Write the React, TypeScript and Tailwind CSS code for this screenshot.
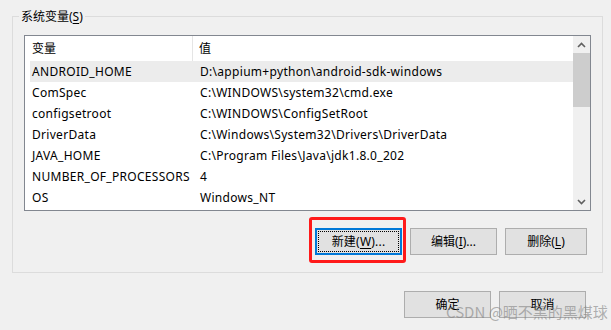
import React from "react";

const font = {
  fontFamily: '"Noto Sans", "Noto Sans CJK SC", sans-serif',
};

const rows: [string, string][] = [
  ["ANDROID_HOME", "D:\\appium+python\\android-sdk-windows"],
  ["ComSpec", "C:\\WINDOWS\\system32\\cmd.exe"],
  ["configsetroot", "C:\\WINDOWS\\ConfigSetRoot"],
  ["DriverData", "C:\\Windows\\System32\\Drivers\\DriverData"],
  ["JAVA_HOME", "C:\\Program Files\\Java\\jdk1.8.0_202"],
  ["NUMBER_OF_PROCESSORS", "4"],
  ["OS", "Windows_NT"],
];

function Btn({ children, w = "w-[87px]" }: { children: React.ReactNode; w?: string }) {
  return (
    <div
      className={`${w} h-[27px] shrink-0 border border-[#adadad] bg-[#e1e1e1] flex items-center justify-center text-[12px] text-black`}
    >
      {children}
    </div>
  );
}

export default function App() {
  return (
    <div
      className="relative w-[611px] h-[330px] bg-[#f0f0f0] overflow-hidden text-black"
      style={font}
    >
      <fieldset className="ml-[12px] mt-[8px] w-[591px] h-[265px] border border-[#dcdcdc]">
        <legend className="ml-[6px] px-[2px] text-[12px] leading-[17px]">
          系统变量(<span className="underline underline-offset-2">S</span>)
        </legend>
        <div className="ml-[11px] mt-[10px] w-[567px] h-[176px] border border-[#828790] bg-white flex">
          <div className="flex-1 pl-[5px] flex flex-col">
            <div className="h-[25px] flex items-center text-[12px] shrink-0">
              <div className="w-[163px] h-full pl-[2px] flex items-center border-r border-[#e5e5e5]">
                变量
              </div>
              <div className="pl-[6px]">值</div>
            </div>
            {rows.map(([k, v], i) => (
              <div
                key={k}
                className={`h-[21px] shrink-0 flex items-center text-[12px] tracking-[0.3px] ${i === 0 ? "bg-[#ececec]" : ""}`}
              >
                <div className="w-[170px] pl-[2px] whitespace-nowrap">{k}</div>
                <div className="whitespace-nowrap">{v}</div>
              </div>
            ))}
          </div>
          <div className="w-[17px] bg-[#f0f0f0] flex flex-col">
            <div className="h-[17px] flex items-center justify-center">
              <svg width="9" height="6" viewBox="0 0 9 6">
                <path d="M1 5 L4.5 1.5 L8 5" stroke="#606060" strokeWidth="1.6" fill="none" />
              </svg>
            </div>
            <div className="h-[54px] bg-[#cdcdcd]" />
            <div className="flex-1" />
            <div className="h-[17px] flex items-center justify-center">
              <svg width="9" height="6" viewBox="0 0 9 6">
                <path d="M1 1 L4.5 4.5 L8 1" stroke="#606060" strokeWidth="1.6" fill="none" />
              </svg>
            </div>
          </div>
        </div>
        <div className="mt-[17px] ml-[302px] flex">
          <div className="relative">
            <div className="w-[87px] h-[27px] border-2 border-[#0078d7] bg-[#e1e1e1] flex items-center justify-center p-[1px]">
              <div className="w-full h-full border border-dotted border-black flex items-center justify-center text-[12px] tracking-[0.2px]">
                新建(<span className="underline underline-offset-2">W</span>)...
              </div>
            </div>
            <div className="absolute left-[-6px] top-[-11px] w-[97px] h-[46px] border-[3px] border-[#ff1a1a] rounded-[3px]" />
          </div>
          <div className="ml-[8px]">
            <Btn>
              编辑(<span className="underline underline-offset-2">I</span>)...
            </Btn>
          </div>
          <div className="ml-[8px]">
            <Btn w="w-[82px]">
              删除(<span className="underline underline-offset-2">L</span>)
            </Btn>
          </div>
        </div>
      </fieldset>
      <div className="mt-[18px] ml-[404px] flex gap-[8px]">
        <Btn>确定</Btn>
        <Btn>取消</Btn>
      </div>
      <div
        className="absolute left-[446px] top-[302px] text-[15px] leading-[20px] whitespace-nowrap text-[rgba(130,130,130,0.6)]"
        style={{ fontFamily: '"Noto Sans CJK SC", sans-serif' }}
      >
        CSDN @晒不黑的黑煤球
      </div>
    </div>
  );
}
